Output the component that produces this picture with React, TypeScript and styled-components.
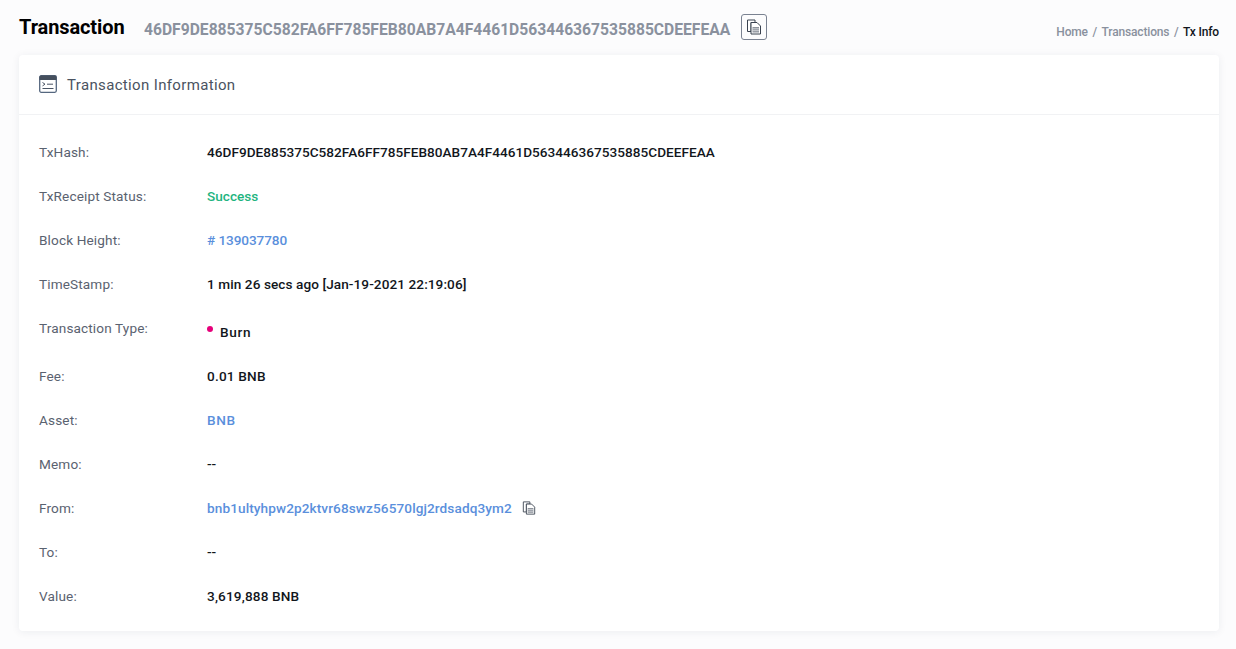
import React from "react";
import styled, { createGlobalStyle } from "styled-components";

const Global = createGlobalStyle`
  html, body { margin: 0; padding: 0; background: #fcfcfd; }
  body { font-family: Roboto, "Liberation Sans", sans-serif; color: #12161c; overflow: hidden; }
`;
const Page = styled.div`
  width: 1236px; height: 649px; box-sizing: border-box; padding: 0 17px 0 19px;
`;
const Header = styled.header`
  height: 55px; display: flex; align-items: flex-start;
`;
const Title = styled.h1`
  margin: 15px 0 0; font-size: 20px; line-height: 24px; font-weight: 700; color: #000; letter-spacing: -0.1px; width: 125px;
`;
const HeadHash = styled.span`
  margin-top: 20px; font-size: 15.65px; line-height: 20px; font-weight: 700; color: #8a919e;
`;
const CopyBox = styled.button`
  margin: 14px 0 0 11px; width: 26px; height: 26px; padding: 0; display: flex; align-items: center; justify-content: center;
  background: transparent; border: 1px solid #7a8291; border-radius: 3px;
`;
const Crumbs = styled.nav`
  margin: 25px 0 0 auto; display: flex; gap: 4.6px; font-size: 12px; letter-spacing: -0.16px; line-height: 14px; font-weight: 500; color: #8a919e;
`;
const Current = styled.span`color: #12161c;`;
const Card = styled.section`
  background: #fff; border-radius: 4px; box-shadow: 0 1px 8px rgba(30, 40, 70, 0.07); height: 576px;
`;
const CardHead = styled.div`
  height: 60px; box-sizing: border-box; border-bottom: 1px solid #f1f2f4; padding: 0 20px; display: flex; align-items: center; gap: 10px;
  font-size: 15px; letter-spacing: 0.35px; color: #4a5361;
`;
const HeadIcon = styled.svg`
  margin-top: -1px; flex: none;
`;
const Rows = styled.div`
  padding: 15px 20px 0;
`;
const Row = styled.div<{ $tall?: boolean }>`
  height: ${p => (p.$tall ? 48 : 44)}px; display: flex; align-items: center; font-size: 13.6px;
`;
const Label = styled.div<{ $tall?: boolean }>`
  width: 168px; color: #5a6270; letter-spacing: 0.13px; ${p => p.$tall && "margin-bottom: 4px;"}
`;
const Value = styled.div<{ $tone?: string; $track?: number }>`
  font-weight: 500; display: flex; align-items: center;
  color: ${p => p.$tone ?? "#12161c"};
  letter-spacing: ${p => p.$track ?? 0}px;
`;
const Dot = styled.i`
  width: 6px; height: 6px; border-radius: 50%; background: #e6007a; margin-right: 7px; margin-bottom: 3px;
`;
const BurnText = styled.span`margin-top: 4px;`;
const SmallCopy = styled.span`display: flex; margin-left: 10px;`;

const CopyIcon = ({ size }: { size: number }) => (
  <svg width={size} height={size} viewBox="0 0 16 16" fill="none">
    <path d="M1.5 1H9v2.500H5v9H1.5z" fill="#fff" stroke="#39424f" strokeWidth="1" />
    <path d="M5 3.500h6L14.500 7v8H5z" fill="#fff" stroke="#39424f" strokeWidth="1" />
    <path d="M6.500 8H13v5.500H6.500z" fill="#8d939c" />
    <path d="M6.500 9.800H13M6.500 11.700H13" stroke="#fff" strokeWidth="0.6" />
  </svg>
);
const TermIcon = () => (
  <HeadIcon width="18" height="18" viewBox="0 0 18 18" fill="none">
    <rect x="0.7" y="0.7" width="16.6" height="16.6" rx="1.5" fill="#fff" stroke="#55677f" strokeWidth="1.3" />
    <path d="M0.5 2A1.5 1.5 0 0 1 2 .5h14A1.500 1.500 0 0 1 17.500 2v3H.5z" fill="#454f5d" />
    <path d="M3.500 7.500L6 9.200l-2.500 1.700M8 9.200h6M3.500 13.500h11" stroke="#4a5565" strokeWidth="1" />
  </HeadIcon>
);

const hash = "46DF9DE885375C582FA6FF785FEB80AB7A4F4461D563446367535885CDEEFEAA";
const blue = "#5a8fdc";

export default function App() {
  return (
    <Page>
      <Global />
      <Header>
        <Title>Transaction</Title>
        <HeadHash>{hash}</HeadHash>
        <CopyBox><CopyIcon size={16} /></CopyBox>
        <Crumbs>
          <span>Home</span><span>/</span><span>Transactions</span><span>/</span><Current>Tx Info</Current>
        </Crumbs>
      </Header>
      <Card>
        <CardHead><TermIcon />Transaction Information</CardHead>
        <Rows>
          <Row><Label>TxHash:</Label><Value $track={0.02}>{hash}</Value></Row>
          <Row><Label>TxReceipt Status:</Label><Value $tone="#1fb47f">Success</Value></Row>
          <Row><Label>Block Height:</Label><Value $tone={blue} $track={-0.1}># 139037780</Value></Row>
          <Row><Label>TimeStamp:</Label><Value $track={0.08}>1 min 26 secs ago [Jan-19-2021 22:19:06]</Value></Row>
          <Row $tall><Label $tall>Transaction Type:</Label><Value $track={0.7}><Dot /><BurnText>Burn</BurnText></Value></Row>
          <Row><Label>Fee:</Label><Value $track={0.2}>0.01 BNB</Value></Row>
          <Row><Label>Asset:</Label><Value $tone={blue} $track={0.6}>BNB</Value></Row>
          <Row><Label>Memo:</Label><Value>--</Value></Row>
          <Row><Label>From:</Label><Value $tone={blue} $track={0.1}>bnb1ultyhpw2p2ktvr68swz56570lgj2rdsadq3ym2<SmallCopy><CopyIcon size={14} /></SmallCopy></Value></Row>
          <Row><Label>To:</Label><Value>--</Value></Row>
          <Row><Label>Value:</Label><Value $track={0.15}>3,619,888 BNB</Value></Row>
        </Rows>
      </Card>
    </Page>
  );
}
